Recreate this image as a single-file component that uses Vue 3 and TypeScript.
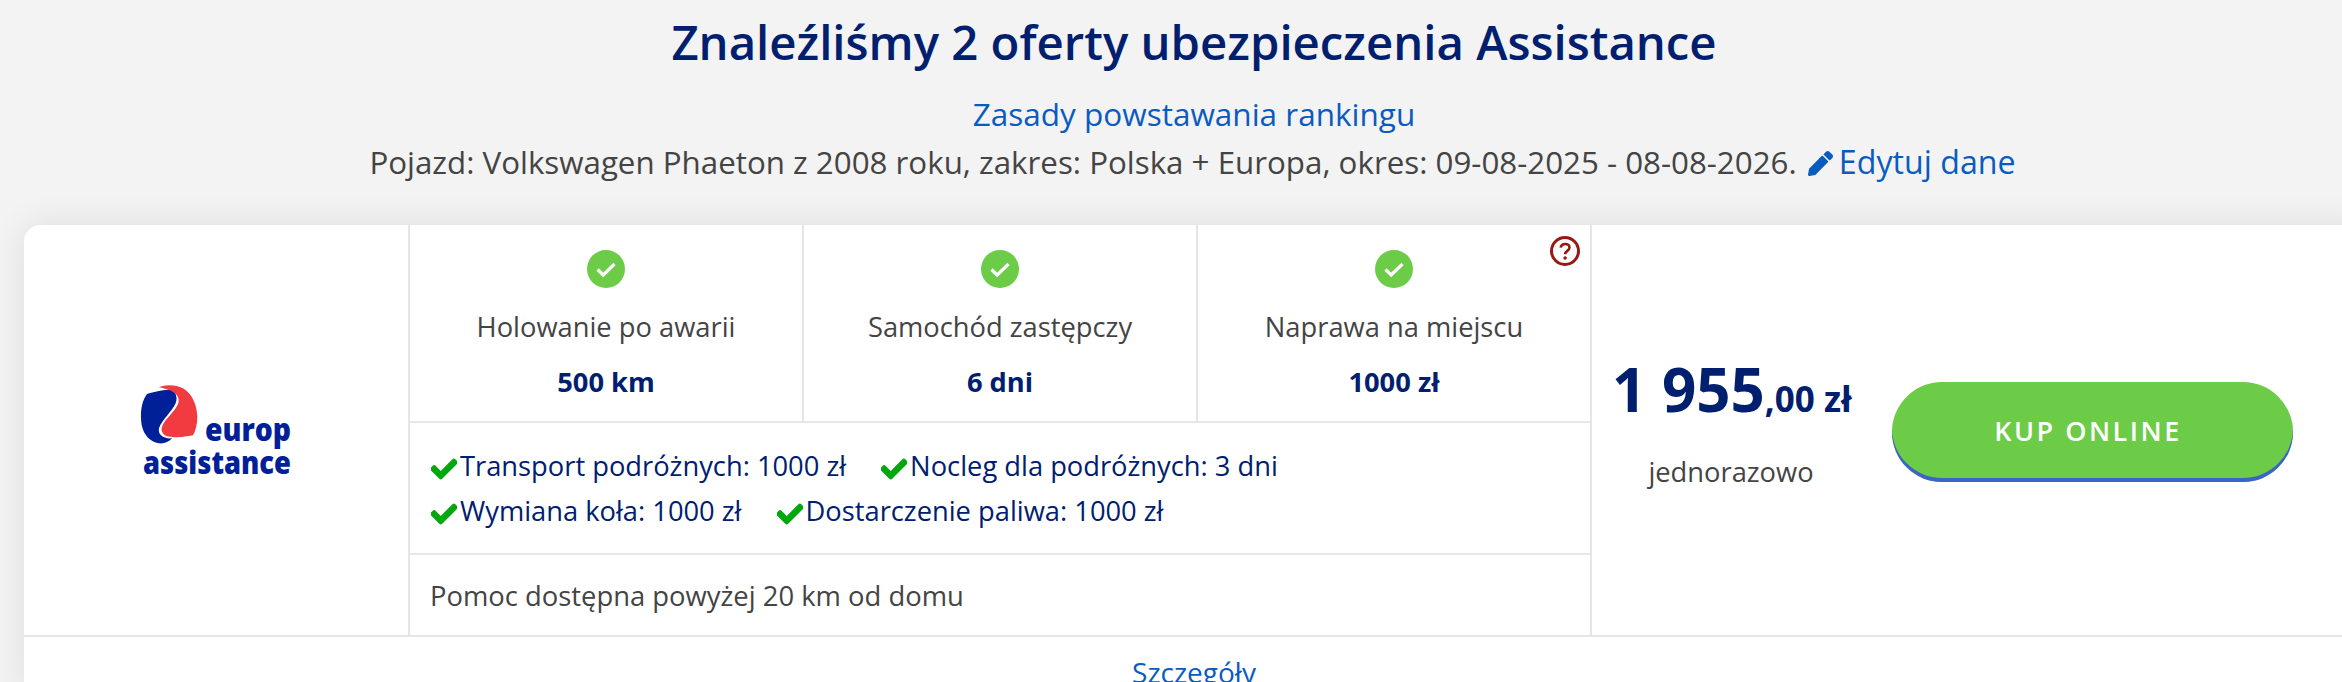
<script setup lang="ts">
interface Coverage {
  label: string;
  value: string;
  help?: boolean;
}

const coverages: Coverage[] = [
  { label: 'Holowanie po awarii', value: '500 km' },
  { label: 'Samochód zastępczy', value: '6 dni' },
  { label: 'Naprawa na miejscu', value: '1000 zł', help: true },
];

const perkRows: string[][] = [
  ['Transport podróżnych: 1000 zł', 'Nocleg dla podróżnych: 3 dni'],
  ['Wymiana koła: 1000 zł', 'Dostarczenie paliwa: 1000 zł'],
];
</script>

<template>
  <div class="page">
    <header class="head">
      <h1 class="title">Znaleźliśmy 2 oferty ubezpieczenia Assistance</h1>
      <a class="link rules">Zasady powstawania rankingu</a>
      <p class="summary">
        Pojazd: Volkswagen Phaeton z 2008 roku, zakres: Polska + Europa, okres: 09-08-2025 - 08-08-2026.
        <a class="link edit">
          <svg class="pencil" viewBox="0 0 512 512">
            <path
              d="M497.9 142.1l-46.1 46.1c-4.7 4.7-12.3 4.7-17 0l-111-111c-4.7-4.7-4.7-12.3 0-17l46.1-46.1c18.7-18.7 49.1-18.7 67.9 0l60.1 60.1c18.8 18.7 18.8 49.1 0 67.9zM284.2 99.8L21.6 362.4.4 483.9c-2.9 16.4 11.4 30.6 27.8 27.8l121.5-21.3 262.6-262.6c4.7-4.7 4.7-12.3 0-17l-111-111c-4.8-4.7-12.4-4.7-17.1 0z"
            />
          </svg>Edytuj dane
        </a>
      </p>
    </header>

    <section class="card">
      <div class="offer">
        <div class="logo-col">
          <svg class="logo" viewBox="-10 -2 171 104">
            <g transform="translate(-40.67 -15) scale(0.3333)">
              <path
                fill="#00209a"
                d="M140 72C165 64 195 60 214 58C228 68 232 85 226 100C215 125 185 150 176 175C172 195 190 207 215 205C205 217 190 222 175 220C150 216 130 195 124 165C120 135 120 100 140 72Z"
              />
              <path
                fill="#f23a41"
                d="M175 52C195 43 225 43 248 55C275 70 290 105 291 140C291 160 287 180 278 196C255 200 235 204 212 200C190 200 180 185 185 170C195 145 225 125 234 100C240 80 225 60 175 52Z"
              />
            </g>
            <text class="logo-word" x="64" y="56" textLength="86" lengthAdjust="spacingAndGlyphs">europ</text>
            <text class="logo-word" x="2" y="89" textLength="148" lengthAdjust="spacingAndGlyphs">assistance</text>
          </svg>
        </div>

        <div class="details">
          <div class="coverages">
            <div v-for="item in coverages" :key="item.label" class="coverage">
              <svg class="ok" viewBox="0 0 38 38">
                <circle cx="19" cy="19" r="19" fill="#6ccb47" />
                <path d="M10.5 19.5l5.7 5.5L27.5 14" fill="none" stroke="#fff" stroke-width="3.2" />
              </svg>
              <div class="coverage-label">{{ item.label }}</div>
              <div class="coverage-value">{{ item.value }}</div>
              <svg v-if="item.help" class="help" viewBox="0 0 30 30">
                <circle cx="15" cy="15" r="13.5" fill="none" stroke="#971a12" stroke-width="3" />
                <path
                  d="M10.6 11.6c.4-2.4 2.2-3.6 4.5-3.6 2.5 0 4.4 1.4 4.4 3.6 0 3.4-4.4 3.2-4.4 6.6"
                  fill="none"
                  stroke="#971a12"
                  stroke-width="2.6"
                />
                <circle cx="15.1" cy="22" r="1.8" fill="#971a12" />
              </svg>
            </div>
          </div>

          <div class="perks">
            <div v-for="(row, i) in perkRows" :key="i" class="perk-row">
              <span v-for="perk in row" :key="perk" class="perk">
                <svg class="tick" viewBox="0 0 512 512">
                  <path
                    d="M173.898 439.404l-166.4-166.4c-9.997-9.997-9.997-26.206 0-36.204l36.203-36.204c9.997-9.998 26.207-9.998 36.204 0L192 312.69 432.095 72.596c9.997-9.997 26.207-9.997 36.204 0l36.203 36.204c9.997 9.997 9.997 26.206 0 36.204l-294.4 294.401c-9.998 9.997-26.207 9.997-36.204-.001z"
                  />
                </svg>{{ perk }}
              </span>
            </div>
          </div>

          <div class="note">Pomoc dostępna powyżej 20 km od domu</div>
        </div>

        <div class="buy">
          <div class="price-box">
            <div class="price"><span class="price-main">1 955</span><span class="price-rest">,00 zł</span></div>
            <div class="period">jednorazowo</div>
          </div>
          <button class="cta" type="button">KUP ONLINE</button>
        </div>
      </div>

      <div class="more"><a class="link">Szczegóły</a></div>
    </section>
  </div>
</template>

<style>
html,
body {
  margin: 0;
  height: 682px;
  overflow: hidden;
  background: #f3f3f3;
}
</style>

<style scoped>
.page {
  width: 2340px;
  margin-left: 24px;
  font-family: "Open Sans", sans-serif;
  color: #444;
}

.head {
  margin-left: -24px;
  padding-left: 24px;
  text-align: center;
}

.title {
  margin: 0;
  padding-top: 11px;
  font-size: 47.3px;
  line-height: 61px;
  font-weight: 600;
  color: #00206f;
}

.link {
  color: #0a5bc0;
}

.rules {
  display: block;
  margin-top: 20px;
  font-size: 31.5px;
  line-height: 44px;
}

.summary {
  margin: 0;
  padding: 3px 3px 0 0;
  font-size: 31.3px;
  line-height: 46px;
}

.edit {
  margin-left: 3px;
  font-size: 32.2px;
  white-space: nowrap;
}

.pencil {
  width: 25px;
  height: 25px;
  margin-right: 6px;
  fill: currentColor;
  vertical-align: -2px;
}

.card {
  margin-top: 40px;
  background: #fff;
  border-radius: 16px 16px 0 0;
  box-shadow: 0 0 35px rgba(0, 0, 0, 0.09);
}

.offer {
  display: grid;
  grid-template-columns: 384px 1184px 1fr;
  height: 410px;
  border-bottom: 2px solid #e6e6e6;
}

.logo-col {
  display: flex;
  align-items: center;
  justify-content: center;
}

.logo {
  display: block;
  width: 171px;
  height: 104px;
  margin-top: 10px;
}

.logo-word {
  font-size: 32px;
  font-weight: 800;
  fill: #00209a;
}

.details {
  display: flex;
  flex-direction: column;
  border-left: 2px solid #e6e6e6;
  border-right: 2px solid #e6e6e6;
}

.coverages {
  display: grid;
  grid-template-columns: 392px 394px 394px;
  height: 196px;
  border-bottom: 2px solid #e6e6e6;
}

.coverage {
  position: relative;
  display: flex;
  flex-direction: column;
  align-items: center;
  padding-top: 25px;
}

.coverage + .coverage {
  border-left: 2px solid #e6e6e6;
}

.ok {
  display: block;
  width: 38px;
  height: 38px;
}

.coverage-label {
  margin-top: 19px;
  font-size: 27.3px;
  line-height: 40px;
}

.coverage-value {
  margin-top: 15px;
  font-size: 27.3px;
  line-height: 40px;
  font-weight: 700;
  color: #00206f;
}

.help {
  position: absolute;
  top: 11px;
  right: 10px;
  width: 30px;
  height: 30px;
}

.perks {
  display: flex;
  flex-direction: column;
  justify-content: center;
  gap: 5px;
  height: 132px;
  padding-left: 21px;
  box-sizing: border-box;
  border-bottom: 2px solid #e6e6e6;
  color: #00206f;
}

.perk-row {
  display: flex;
  gap: 35px;
  font-size: 27.3px;
  line-height: 40px;
}

.perk {
  white-space: nowrap;
}

.tick {
  width: 26px;
  height: 26px;
  margin-right: 3px;
  fill: #00a80e;
  stroke: #00a80e;
  stroke-width: 28;
  vertical-align: -6px;
}

.note {
  flex: 1;
  display: flex;
  align-items: center;
  padding-left: 20px;
  font-size: 27.4px;
}

.buy {
  display: flex;
  align-items: center;
  padding-left: 20px;
}

.price-box {
  width: 238px;
  margin-right: 42px;
  padding-bottom: 12px;
  text-align: center;
}

.price {
  white-space: nowrap;
  font-weight: 700;
  color: #00206f;
  line-height: 70px;
  margin-top: -3px;
}

.price-main {
  font-size: 60px;
}

.price-rest {
  font-size: 35px;
}

.period {
  margin-top: 11px;
  font-size: 27.3px;
  line-height: 40px;
}

.cta {
  width: 401px;
  height: 100px;
  margin-top: 3px;
  padding: 0 9px 3px 0;
  border: none;
  border-radius: 50px;
  background: #6ccb47;
  box-shadow: inset 0 -4px 0 #3d62c8;
  color: #fff;
  font-family: inherit;
  font-size: 27px;
  font-weight: 600;
  letter-spacing: 2.5px;
}

.more {
  padding-top: 15px;
  text-align: center;
  font-size: 28px;
  line-height: 40px;
}
</style>
